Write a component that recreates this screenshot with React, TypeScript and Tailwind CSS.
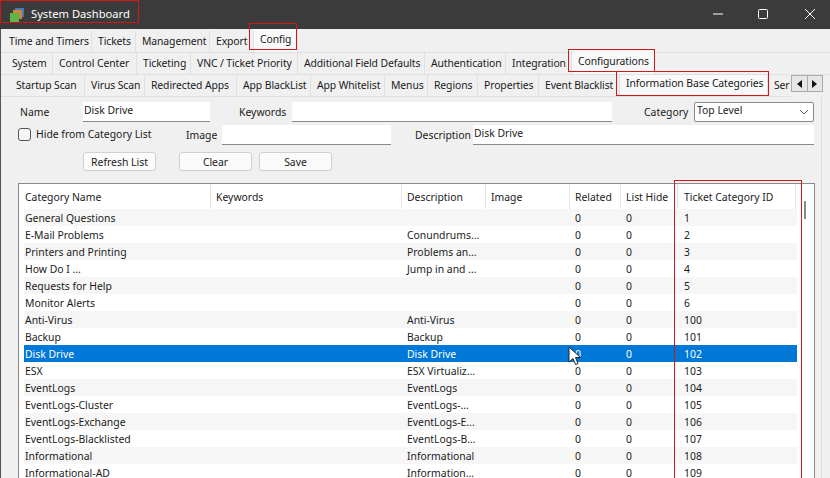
const font = "font-['Noto_Sans',sans-serif]"

const topTabs = [
  ["Time and Timers", "w-[89px]"],
  ["Tickets", "w-[44px]"],
  ["Management", "w-[74px]"],
  ["Export", "w-[44px]"],
  ["Config", "w-[44px]"],
]
const midTabs = [
  ["System", "w-[47px]"],
  ["Control Center", "w-[84px]"],
  ["Ticketing", "w-[54px]"],
  ["VNC / Ticket Priority", "w-[107px]"],
  ["Additional Field Defaults", "w-[127px]"],
  ["Authentication", "w-[81px]"],
  ["Integration", "w-[66px]"],
  ["Configurations", "w-[83px]"],
]
const lowTabs = [
  ["Startup Scan", "w-[75px]"],
  ["Virus Scan", "w-[60px]"],
  ["Redirected Apps", "w-[92px]"],
  ["App BlackList", "w-[74px]"],
  ["App Whitelist", "w-[74px]"],
  ["Menus", "w-[43px]"],
  ["Regions", "w-[50px]"],
  ["Properties", "w-[61px]"],
  ["Event Blacklist", "w-[81px]"],
  ["Information Base Categories", "w-[148px]"],
  ["Ser", "w-[30px]"],
]

const rows = [
  ["General Questions", "", "0", "0", "1"],
  ["E-Mail Problems", "Conundrums...", "0", "0", "2"],
  ["Printers and Printing", "Problems an...", "0", "0", "3"],
  ["How Do I ...", "Jump in and ...", "0", "0", "4"],
  ["Requests for Help", "", "0", "0", "5"],
  ["Monitor Alerts", "", "0", "0", "6"],
  ["Anti-Virus", "Anti-Virus", "0", "0", "100"],
  ["Backup", "Backup", "0", "0", "101"],
  ["Disk Drive", "Disk Drive", "0", "0", "102"],
  ["ESX", "ESX Virtualiz...", "0", "0", "103"],
  ["EventLogs", "EventLogs", "0", "0", "104"],
  ["EventLogs-Cluster", "EventLogs-...", "0", "0", "105"],
  ["EventLogs-Exchange", "EventLogs-E...", "0", "0", "106"],
  ["EventLogs-Blacklisted", "EventLogs-B...", "0", "0", "107"],
  ["Informational", "Informational", "0", "0", "108"],
  ["Informational-AD", "Information...", "0", "0", "109"],
]

function Tab({ label, width, active }: { label: string; width: string; active?: boolean }) {
  return (
    <div className={`pl-[6px] shrink-0 tracking-[-0.1px] whitespace-nowrap border-r border-[#e0e0e0] ${width} ${active ? "bg-[#f9f9f9] -mt-[2px] relative" : ""}`}>
      {label}
    </div>
  )
}

function Field({ value, className }: { value?: string; className: string }) {
  return <div className={`h-[20px] bg-white border-b border-[#8a8a8a] pl-[1px] leading-[17px] ${className}`}>{value}</div>
}

function Button({ label, className }: { label: string; className: string }) {
  return <div className={`h-[19px] rounded-[3px] border border-[#d0d0d0] bg-[#fbfbfb] text-center leading-[19px] ${className}`}>{label}</div>
}

export default function App() {
  return (
    <div className={`relative w-[830px] h-[478px] overflow-hidden bg-[#f0f0f0] text-[10.4px] text-[#1a1a1a] ${font}`}>
      <div className="h-[29px] bg-[#3b3b3b] flex items-center text-white">
        <svg width="16" height="16" viewBox="0 0 16 16" className="ml-[9px]">
          <rect x="6" y="1" width="9" height="9" fill="#4a78b5" />
          <rect x="4" y="3" width="9" height="9" fill="#c9863e" />
          <rect x="1" y="6" width="9" height="9" fill="#5fb548" />
        </svg>
        <span className="ml-[6px] text-[11.2px]">System Dashboard</span>
        <div className="ml-auto flex items-center -mt-[2px]">
          <svg width="12" height="12" viewBox="0 0 12 12" className="mr-[33px]"><path d="M1 6h10" stroke="#fff" /></svg>
          <svg width="12" height="12" viewBox="0 0 12 12" className="mr-[35px]"><rect x="1.5" y="1.5" width="9" height="9" rx="1" fill="none" stroke="#fff" /></svg>
          <svg width="12" height="12" viewBox="0 0 12 12" className="mr-[14px]"><path d="M1 1l10 10M11 1L1 11" stroke="#fff" /></svg>
        </div>
      </div>

      <div className="border-l border-[#555] h-[449px]">
        <div className="flex h-[24px] pl-[2px] pt-[2px] leading-[21px] border-b border-[#e0e0e0]">
          {topTabs.map(([t, w]) => <Tab key={t} label={t} width={w} active={t === "Config"} />)}
        </div>
        <div className="flex h-[22px] pl-[5px] leading-[21px] border-b border-[#e0e0e0]">
          {midTabs.map(([t, w]) => <Tab key={t} label={t} width={w} active={t === "Configurations"} />)}
        </div>
        <div className="flex h-[22px] pl-[9px] leading-[21px] overflow-hidden w-[790px] border-b border-[#e0e0e0]">
          {lowTabs.map(([t, w]) => <Tab key={t} label={t} width={w} active={t === "Information Base Categories"} />)}
        </div>

        <div className="w-[821px] h-[381px] border-r border-[#dedede] pl-[19px] pt-[4px]">
          <div className="flex items-center h-[21px]">
            <span className="w-[63px] pt-[3px]">Name</span>
            <Field value="Disk Drive" className="w-[127px]" />
            <span className="ml-[29px] w-[53px] pt-[3px]">Keywords</span>
            <Field className="w-[320px]" />
            <span className="ml-[32px] w-[50px] pt-[3px]">Category</span>
            <div className="h-[20px] w-[120px] bg-white border border-[#8a8a8a] rounded-[2px] flex items-center pl-[2px] leading-[15px] pb-[2px]">
              Top Level
              <svg width="10" height="6" viewBox="0 0 10 6" className="ml-auto mr-[4px] mt-[2px]"><path d="M1 1l4 4 4-4" fill="none" stroke="#555" /></svg>
            </div>
          </div>
          <div className="flex items-center h-[21px] mt-[2px]">
            <div className="w-[13px] h-[13px] -ml-[2px] rounded-[3px] border border-[#555] bg-[#f5f5f5]" />
            <span className="ml-[5px] w-[131px]">Hide from Category List</span>
            <span className="ml-[19px] w-[36px] pt-[2px]">Image</span>
            <Field className="w-[169px]" />
            <span className="ml-[24px] w-[58px] pt-[2px]">Description</span>
            <Field value="Disk Drive" className="w-[341px]" />
          </div>
          <div className="flex h-[19px] mt-[7px] ml-[63px]">
            <Button label="Refresh List" className="w-[73px]" />
            <Button label="Clear" className="w-[73px] ml-[23px]" />
            <Button label="Save" className="w-[73px] ml-[7px]" />
          </div>

          <div className="-ml-[2px] mt-[12px] w-[797px] h-[295px] bg-white border border-[#8a8a8a] border-b-0 flex">
            <div className="w-[778px] pl-[5px] shrink-0">
              <div className="grid grid-cols-[187px_191px_84px_84px_51px_57px_118px] h-[25px] leading-[27px]">
                {["Category Name", "Keywords", "Description", "Image", "Related", "List Hide", "Ticket Category ID"].map((h, i) => (
                  <div key={h} className={`${i === 0 ? "pl-[1px]" : i === 6 ? "pl-[6px]" : "pl-[5px]"} h-[25px] border-r border-[#e5e5e5] whitespace-nowrap`}>{h}</div>
                ))}
              </div>
              {rows.map((r, i) => (
                <div
                  key={r[0]}
                  className={`grid grid-cols-[187px_191px_84px_84px_51px_57px_118px] h-[17px] leading-[19px] ${r[0] === "Disk Drive" ? "bg-[#0078d7] text-white" : i % 2 === 1 ? "bg-white" : "bg-[#f6f6f6]"}`}
                >
                  <div className="pl-[1px] whitespace-nowrap">{r[0]}</div>
                  <div />
                  <div className="pl-[5px] whitespace-nowrap">{r[1]}</div>
                  <div />
                  <div className="pl-[5px]">{r[2]}</div>
                  <div className="pl-[5px]">{r[3]}</div>
                  <div className="pl-[6px]">{r[4]}</div>
                </div>
              ))}
            </div>
            <div className="flex-1 pl-[7px] pt-[17px]">
              <div className="w-[2px] h-[18px] bg-[#8a8a8a]" />
            </div>
          </div>
        </div>
      </div>

      <div className="absolute left-[791px] top-[75px] flex border border-[#aaa] bg-[#e6e6e6] h-[17px] w-[32px]">
        <div className="flex-1 border-r border-[#aaa] flex items-center justify-center">
          <svg width="5" height="8" viewBox="0 0 5 8"><path d="M5 0v8L0 4z" fill="#111" /></svg>
        </div>
        <div className="flex-1 flex items-center justify-center">
          <svg width="5" height="8" viewBox="0 0 5 8"><path d="M0 0v8l5-4z" fill="#111" /></svg>
        </div>
      </div>

      <svg width="14" height="20" viewBox="0 0 14 20" className="absolute left-[568px] top-[346px]">
        <path d="M1 1v15l4-3.5 2.5 6 2.5-1-2.5-6 5 0z" fill="#fff" stroke="#222" />
      </svg>

      <div className="absolute left-0 top-0 w-[139px] h-[23px] border border-[#d01818]" />
      <div className="absolute left-[249px] top-[23px] w-[48px] h-[27px] border border-[#d01818]" />
      <div className="absolute left-[568px] top-[49px] w-[87px] h-[23px] border border-[#d01818]" />
      <div className="absolute left-[616px] top-[71px] w-[153px] h-[25px] border border-[#d01818]" />
      <div className="absolute left-[674px] top-[180px] w-[128px] h-[298px] border border-[#d01818] border-b-0" />
    </div>
  )
}
